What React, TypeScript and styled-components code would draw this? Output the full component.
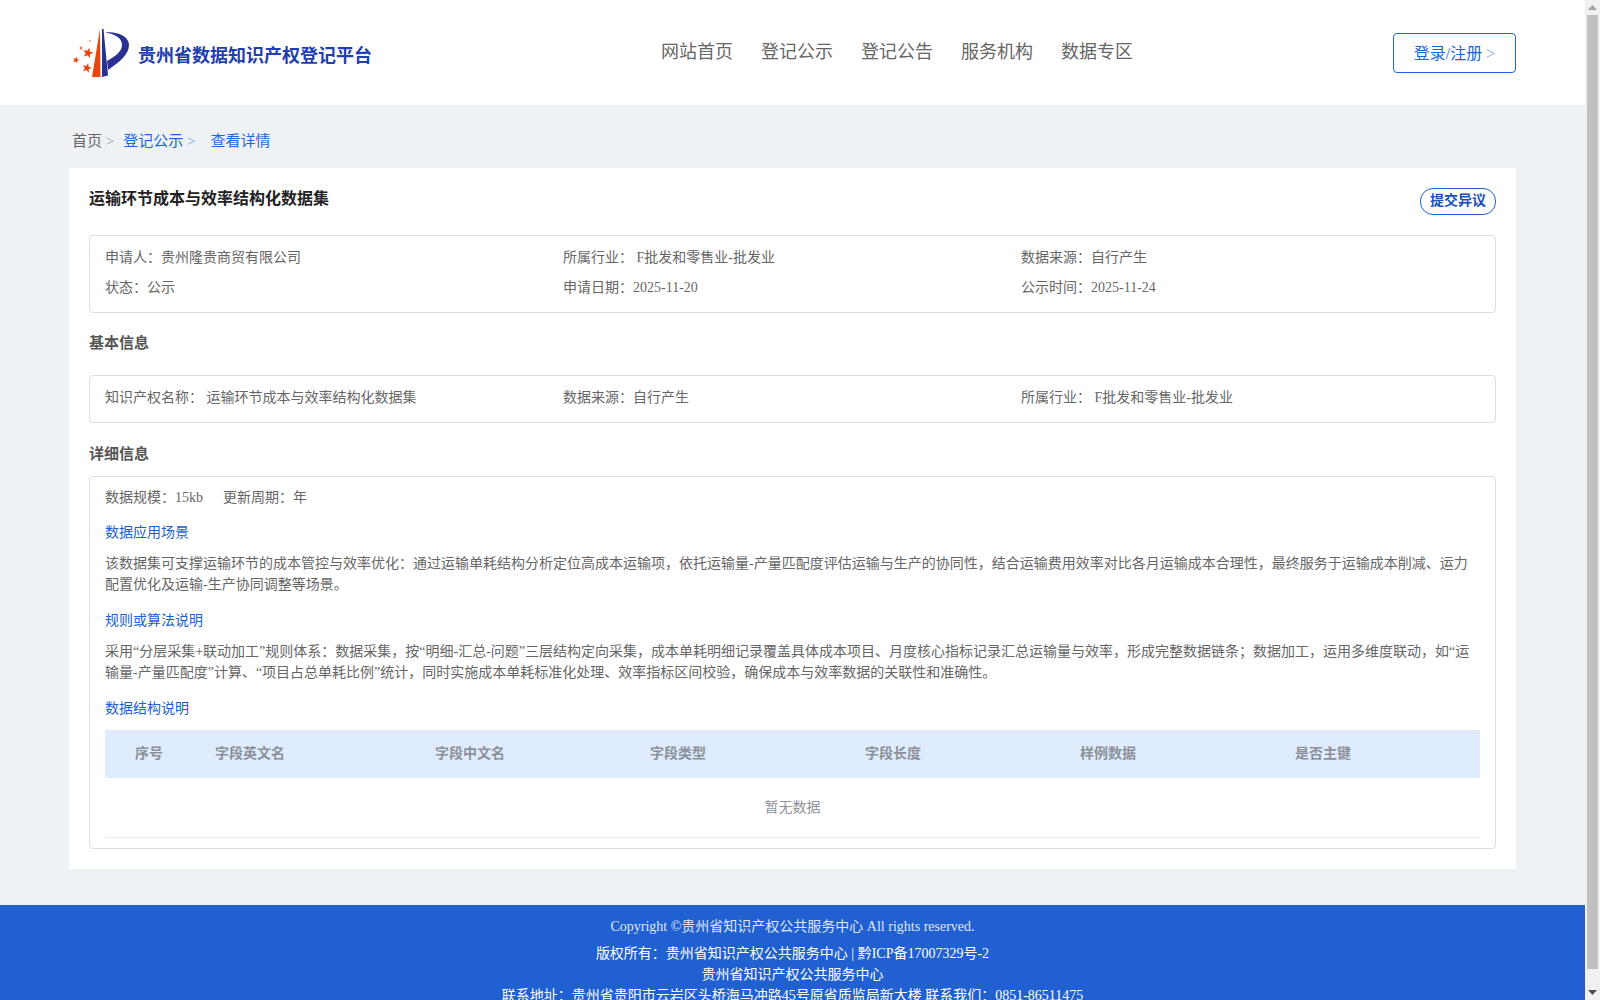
import React from "react";
import styled, { createGlobalStyle } from "styled-components";

const Global = createGlobalStyle`
  html, body { margin: 0; padding: 0; height: 100%; overflow: hidden; }
  * { box-sizing: border-box; }
  body { font-family: "Liberation Serif", "Noto Sans CJK SC", serif; color: #666; }
  #root { height: 100%; }
`;

const Shell = styled.div`
  display: flex;
  height: 100vh;
  overflow: hidden;
`;

const Page = styled.div`
  flex: 1;
  min-width: 0;
  background: #eef2f5;
`;

const ScrollRail = styled.div`
  width: 15px;
  flex: none;
  background: #f1f1f1;
  display: flex;
  flex-direction: column;
  align-items: center;
`;

const RailButton = styled.div`
  height: 15px;
  flex: none;
  display: flex;
  align-items: center;
  justify-content: center;
`;

const RailThumb = styled.div`
  width: 11px;
  flex: 1;
  margin-bottom: 16px;
  background: #c1c1c1;
`;

const Header = styled.header`
  height: 105px;
  background: #fff;
  display: flex;
  align-items: center;
  padding: 0 69px 0 72px;
`;

const Brand = styled.div`
  display: flex;
  align-items: center;
  gap: 8px;
  flex: none;
`;

const BrandName = styled.span`
  font-size: 18px;
  font-weight: 700;
  color: #1f3fae;
  padding-top: 2px;
`;

const Nav = styled.nav`
  display: flex;
  gap: 28px;
  margin-left: 289px;
  padding-bottom: 2px;
`;

const NavItem = styled.a`
  font-size: 18px;
  line-height: 24px;
  color: #666;
`;

const LoginButton = styled.button`
  width: 123px;
  height: 40px;
  margin-left: auto;
  background: #fff;
  border: 1px solid #1a66e0;
  border-radius: 4px;
  color: #1a66e0;
  font: 16px "Liberation Serif", "Noto Sans CJK SC", serif;
  padding: 0 0 2px;
`;

const Arrow = styled.span`
  opacity: 0.6;
`;

const Crumbs = styled.div`
  height: 63px;
  padding: 25px 0 0 72px;
  font-size: 15px;
  line-height: 22px;
  display: flex;
`;

const Crumb = styled.span<{ $active?: boolean }>`
  color: ${(p) => (p.$active ? "#1a66e0" : "#666")};
  margin-right: ${(p) => (p.$active ? "15px" : "9px")};
`;

const Card = styled.main`
  margin: 0 69px;
  height: 701px;
  background: #fff;
  padding: 20px;
`;

const TitleRow = styled.div`
  display: flex;
  justify-content: space-between;
  height: 47px;
`;

const Title = styled.h1`
  margin: 0;
  font-size: 16px;
  line-height: 22px;
  font-weight: 700;
  color: #222;
`;

const ObjectionButton = styled.button`
  width: 76px;
  height: 27px;
  background: #fff;
  border: 1px solid #1f60cf;
  border-radius: 13px;
  color: #1a50b8;
  font: 700 14px "Liberation Serif", "Noto Sans CJK SC", serif;
  padding: 0 0 5px;
`;

const Box = styled.section<{ $h: number }>`
  height: ${(p) => p.$h}px;
  border: 1px solid #dedede;
  border-radius: 4px;
  padding: 0 15px;
`;

const InfoGrid = styled.div<{ $rowGap: number; $top: number }>`
  display: grid;
  grid-template-columns: repeat(3, 458px);
  row-gap: ${(p) => p.$rowGap}px;
  padding-top: ${(p) => p.$top}px;
  font-size: 14px;
  line-height: 20px;
  color: #666;
`;

const SectionTitle = styled.h2<{ $h: number; $up?: number; $down?: number }>`
  margin: 0;
  height: ${(p) => p.$h}px;
  padding: ${(p) => p.$down ?? 0}px 0 ${(p) => p.$up ?? 0}px;
  display: flex;
  align-items: center;
  font-size: 15px;
  font-weight: 700;
  color: #555;
`;

const Meta = styled.div`
  padding-top: 9px;
  font-size: 14px;
  line-height: 24px;
  color: #666;
  display: flex;
  gap: 20px;
`;

const SubTitle = styled.div<{ $top: number }>`
  margin-top: ${(p) => p.$top}px;
  font-size: 14px;
  line-height: 20px;
  color: #1a60d0;
`;

const Paragraph = styled.p`
  margin: 10px 0 0;
  font-size: 14px;
  line-height: 21px;
  color: #666;
`;

const TableHead = styled.div`
  display: grid;
  grid-template-columns: 110px 220px repeat(4, 215px) 1fr;
  align-items: center;
  margin-top: 11px;
  height: 48px;
  padding-bottom: 5px;
  background: #dfecfd;
  font-size: 14px;
  font-weight: 700;
  color: #8c9199;
  & > span:first-child { padding-left: 30px; }
`;

const Empty = styled.div`
  height: 60px;
  padding-bottom: 4px;
  border-bottom: 1px solid #ebeef5;
  display: flex;
  align-items: center;
  justify-content: center;
  font-size: 14px;
  color: #909399;
`;

const Footer = styled.footer`
  margin-top: 36px;
  height: 130px;
  background: #2060d0;
  color: #fff;
  text-align: center;
  font-size: 14px;
  padding-top: 9px;
`;

const CopyLine = styled.div`
  line-height: 26px;
  margin-bottom: 3px;
  opacity: 0.85;
`;

const FootLine = styled.div`
  line-height: 21px;
`;

const starPoints = (cx: number, cy: number, r: number) =>
  Array.from({ length: 10 }, (_, i) => {
    const radius = i % 2 === 0 ? r : r * 0.42;
    const a = -Math.PI / 2 + (i * Math.PI) / 5 + 0.25;
    return `${(cx + radius * Math.cos(a)).toFixed(2)},${(cy + radius * Math.sin(a)).toFixed(2)}`;
  }).join(" ");

const Logo = () => (
  <svg width="58" height="50" viewBox="0 0 58 50" aria-hidden="true">
    <path d="M28 1 L28.5 49 L20 49 Z" fill="#e8450f" />
    <path d="M30 1 L31.5 1 L36 47.5 L30 49 Z" fill="#2a3192" />
    <path d="M33 4.5 C45 3 57 8 57 17 C57 27 46 35 36 42 L35 33 C42 29 50 24 50 17 C50 10 43 6 33 4.5 Z" fill="#2a3192" />
    <polygon points={starPoints(16, 25, 5.5)} fill="#e8450f" />
    <polygon points={starPoints(15, 40, 5)} fill="#e8450f" />
    <polygon points={starPoints(4, 32, 3.5)} fill="#e8450f" />
    <circle cx="9" cy="20" r="1.5" fill="#ee7a55" />
    <circle cx="18" cy="13" r="1" fill="#f0a080" />
  </svg>
);

const navItems = ["网站首页", "登记公示", "登记公告", "服务机构", "数据专区"];
const columns = ["序号", "字段英文名", "字段中文名", "字段类型", "字段长度", "样例数据", "是否主键"];

export default function App() {
  return (
    <>
      <Global />
      <Shell>
        <Page>
          <Header>
            <Brand>
              <Logo />
              <BrandName>贵州省数据知识产权登记平台</BrandName>
            </Brand>
            <Nav>
              {navItems.map((n) => (
                <NavItem key={n}>{n}</NavItem>
              ))}
            </Nav>
            <LoginButton>
              登录/注册 <Arrow>&gt;</Arrow>
            </LoginButton>
          </Header>
          <Crumbs>
            <Crumb>首页 <Arrow>&gt;</Arrow></Crumb>
            <Crumb $active>登记公示 <Arrow>&gt;</Arrow></Crumb>
            <Crumb $active>查看详情</Crumb>
          </Crumbs>
          <Card>
            <TitleRow>
              <Title>运输环节成本与效率结构化数据集</Title>
              <ObjectionButton>提交异议</ObjectionButton>
            </TitleRow>
            <Box $h={78}>
              <InfoGrid $rowGap={10} $top={12}>
                <span>申请人：贵州隆贵商贸有限公司</span>
                <span>所属行业： F批发和零售业-批发业</span>
                <span>数据来源：自行产生</span>
                <span>状态：公示</span>
                <span>申请日期：2025-11-20</span>
                <span>公示时间：2025-11-24</span>
              </InfoGrid>
            </Box>
            <SectionTitle $h={62} $up={6}>基本信息</SectionTitle>
            <Box $h={48}>
              <InfoGrid $rowGap={0} $top={12}>
                <span>知识产权名称： 运输环节成本与效率结构化数据集</span>
                <span>数据来源：自行产生</span>
                <span>所属行业： F批发和零售业-批发业</span>
              </InfoGrid>
            </Box>
            <SectionTitle $h={53} $down={5}>详细信息</SectionTitle>
            <Box $h={373}>
              <Meta>
                <span>数据规模：15kb</span>
                <span>更新周期：年</span>
              </Meta>
              <SubTitle $top={13}>数据应用场景</SubTitle>
              <Paragraph>
                该数据集可支撑运输环节的成本管控与效率优化：通过运输单耗结构分析定位高成本运输项，依托运输量-产量匹配度评估运输与生产的协同性，结合运输费用效率对比各月运输成本合理性，最终服务于运输成本削减、运力配置优化及运输-生产协同调整等场景。
              </Paragraph>
              <SubTitle $top={16}>规则或算法说明</SubTitle>
              <Paragraph>
                采用“分层采集+联动加工”规则体系：数据采集，按“明细-汇总-问题”三层结构定向采集，成本单耗明细记录覆盖具体成本项目、月度核心指标记录汇总运输量与效率，形成完整数据链条；数据加工，运用多维度联动，如“运输量-产量匹配度”计算、“项目占总单耗比例”统计，同时实施成本单耗标准化处理、效率指标区间校验，确保成本与效率数据的关联性和准确性。
              </Paragraph>
              <SubTitle $top={16}>数据结构说明</SubTitle>
              <TableHead>
                {columns.map((c) => (
                  <span key={c}>{c}</span>
                ))}
              </TableHead>
              <Empty>暂无数据</Empty>
            </Box>
          </Card>
          <Footer>
            <CopyLine>Copyright ©贵州省知识产权公共服务中心 All rights reserved.</CopyLine>
            <FootLine>版权所有：贵州省知识产权公共服务中心 | 黔ICP备17007329号-2</FootLine>
            <FootLine>贵州省知识产权公共服务中心</FootLine>
            <FootLine>联系地址：贵州省贵阳市云岩区头桥海马冲路45号原省质监局新大楼 联系我们：0851-86511475</FootLine>
          </Footer>
        </Page>
        <ScrollRail>
          <RailButton>
            <svg width="9" height="5" viewBox="0 0 9 5" aria-hidden="true"><path d="M4.5 0 9 5H0z" fill="#a3a3a3" /></svg>
          </RailButton>
          <RailThumb />
          <RailButton>
            <svg width="9" height="5" viewBox="0 0 9 5" aria-hidden="true"><path d="M0 0h9L4.5 5z" fill="#505050" /></svg>
          </RailButton>
        </ScrollRail>
      </Shell>
    </>
  );
}
